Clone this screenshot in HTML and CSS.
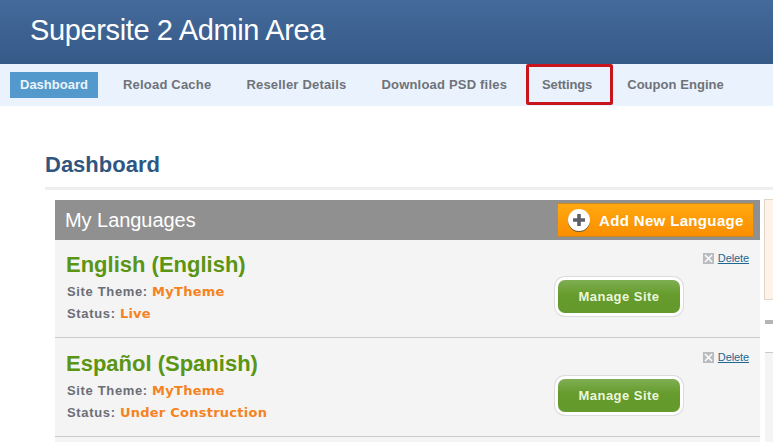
FILE: index.html
```html
<!DOCTYPE html>
<html lang="en">
<head>
    <meta charset="UTF-8">
    <meta name="viewport" content="width=device-width, initial-scale=1.0">
    <title>Supersite 2 Admin Area</title>
    <link rel="stylesheet" href="styles.css">
</head>
<body>
    <div class="header">
        <h1>Supersite 2 Admin Area</h1>
    </div>

    <div class="nav">
        <a class="nav-item active" href="#">Dashboard</a>
        <a class="nav-item" href="#">Reload Cache</a>
        <a class="nav-item" href="#">Reseller Details</a>
        <a class="nav-item" href="#">Download PSD files</a>
        <a class="nav-item marked" href="#">Settings</a>
        <a class="nav-item coupon" href="#">Coupon Engine</a>
    </div>

    <div class="page">
        <h2 class="page-title">Dashboard</h2>
        <div class="columns">
            <div class="panel">
                <div class="panel-head">
                    <span class="panel-title">My Languages</span>
                    <a class="add-btn" href="#">
                        <svg class="add-icon" width="22" height="23" viewBox="0 0 22 23">
                            <circle cx="11" cy="12" r="11" fill="#6b5a3a"/>
                            <circle cx="11" cy="11" r="11" fill="#fff"/>
                            <path d="M9.200 5h3.600v4.200H17v3.600h-4.200V17H9.200v-4.200H5V9.200h4.200z" fill="#5f5f68"/>
                        </svg>
                        Add New Language
                    </a>
                </div>

                <div class="lang">
                    <div class="lang-info">
                        <h3>English (English)</h3>
                        <p>Site Theme: <span class="val">MyTheme</span></p>
                        <p>Status: <span class="val">Live</span></p>
                    </div>
                    <div class="lang-actions">
                        <a class="delete" href="#"><span class="x-icon">
                            <svg width="11" height="11" viewBox="0 0 11 11"><path d="M2 2l7 7M9 2l-7 7" stroke="#fff" stroke-width="1.500"/></svg>
                        </span><span class="delete-text">Delete</span></a>
                        <a class="manage-btn" href="#">Manage Site</a>
                    </div>
                </div>

                <div class="lang">
                    <div class="lang-info">
                        <h3>Español (Spanish)</h3>
                        <p>Site Theme: <span class="val">MyTheme</span></p>
                        <p>Status: <span class="val">Under Construction</span></p>
                    </div>
                    <div class="lang-actions">
                        <a class="delete" href="#"><span class="x-icon">
                            <svg width="11" height="11" viewBox="0 0 11 11"><path d="M2 2l7 7M9 2l-7 7" stroke="#fff" stroke-width="1.500"/></svg>
                        </span><span class="delete-text">Delete</span></a>
                        <a class="manage-btn" href="#">Manage Site</a>
                    </div>
                </div>
            </div>

            <div class="side">
                <div class="side-note"></div>
                <div class="side-bar"></div>
                <div class="side-box"></div>
            </div>
        </div>
    </div>
</body>
</html>
```

FILE: styles.css
```css
html, body { height: 100%; }
body {
    margin: 0;
    overflow: hidden;
    background: #fff;
    font-family: "Liberation Sans", Arial, sans-serif;
}
a { text-decoration: none; }

.header {
    height: 64px;
    padding-left: 30px;
    box-sizing: border-box;
    background: linear-gradient(#446a9b, #365a88);
}
.header h1 {
    margin: 0;
    padding-top: 13px;
    font-size: 29px;
    line-height: 34px;
    font-weight: normal;
    letter-spacing: -0.37px;
    color: #fff;
}

.nav {
    height: 42px;
    box-sizing: border-box;
    padding-left: 10px;
    display: flex;
    align-items: center;
    gap: 15px;
    background: #eaf3fd;
}
.nav-item {
    position: relative;
    height: 26px;
    line-height: 26px;
    padding: 0 10px;
    font-size: 13px;
    font-weight: bold;
    letter-spacing: 0.2px;
    color: #6f7279;
}
.nav-item.active {
    width: 68px;
    letter-spacing: 0;
    background: #5499cb;
    color: #eaf4fb;
}
.nav-item.marked { letter-spacing: -0.15px; }
.nav-item.coupon { letter-spacing: 0.05px; }
/* red marker drawn over the Settings tab */
.nav-item.marked::after {
    content: "";
    position: absolute;
    top: -8px;
    bottom: -7px;
    left: -6px;
    right: -11px;
    border: 3px solid #c8141c;
    border-radius: 2px;
}

.page { padding: 46px 0 0 45px; }
.page-title {
    margin: 0;
    height: 35px;
    line-height: 26px;
    font-size: 22px;
    color: #2f5680;
    border-bottom: 3px solid #eee;
}

.columns {
    display: flex;
    gap: 4px;
    margin-top: 10px;
    margin-left: 10px;
}
.panel { width: 705px; flex: none; background: #f4f4f5; }
.panel-head {
    height: 40px;
    padding: 3px 6px 3px 10px;
    box-sizing: border-box;
    display: flex;
    align-items: center;
    justify-content: space-between;
    background: #909090;
}
.panel-title { font-size: 20px; letter-spacing: -0.05px; color: #fff; }

.add-btn {
    display: flex;
    align-items: center;
    gap: 9px;
    height: 34px;
    width: 197px;
    box-sizing: border-box;
    padding-left: 10px;
    border: 1px solid #c98a22;
    background: linear-gradient(#ffa90f, #fb8e00);
    font-size: 15px;
    font-weight: bold;
    letter-spacing: 0.35px;
    color: #fff;
}
.add-icon { flex: none; }

.lang {
    height: 98px;
    box-sizing: border-box;
    padding: 12px 11px 0 11px;
    display: flex;
    justify-content: space-between;
    border-bottom: 1px solid #cacaca;
}
.lang + .lang { height: 99px; padding-top: 13px; }
.lang-info h3 {
    margin: 0 0 4px;
    font-size: 22px;
    line-height: 25px;
    color: #5a9513;
}
.lang-info p {
    margin: 0 0 0 1px;
    font-size: 13px;
    line-height: 22px;
    font-weight: bold;
    letter-spacing: 0.65px;
    color: #6b6e75;
}
.val {
    font-family: "DejaVu Sans", Verdana, sans-serif;
    font-size: 13px;
    line-height: 1;
    letter-spacing: 0.25px;
    color: #f5831f;
}

.lang-actions {
    display: flex;
    flex-direction: column;
    align-items: flex-end;
    gap: 16px;
}
.delete { display: flex; align-items: center; gap: 4px; font-size: 11px; height: 12px; }
.delete-text { color: #1d6790; text-decoration: underline; letter-spacing: -0.1px; }
.x-icon { width: 11px; height: 11px; background: #b9bbbe; display: block; line-height: 0; }

.manage-btn {
    display: block;
    width: 122px;
    height: 33px;
    margin-right: 69px;
    line-height: 33px;
    text-align: center;
    border-radius: 7px;
    background: linear-gradient(#7fae53, #659c2c 45%, #64992c);
    box-shadow: 0 0 0 3px #fff, 0 0 0 4px #dcdcdc;
    font-size: 13px;
    font-weight: bold;
    letter-spacing: 0.45px;
    color: #ecf6dc;
}

.side { flex: 1; min-width: 0; margin-top: -1px; }
.side-note { height: 101px; background: #fdf3ea; border: 1px solid #e3d5c6; border-right: 0; box-sizing: border-box; }
.side-bar { height: 4px; margin: 20px 0 0 1px; background: #b5b5b5; }
.side-box { height: 100px; margin: 28px 0 0 1px; background: #f4f4f5; border-top: 1px solid #cacaca; }
```
